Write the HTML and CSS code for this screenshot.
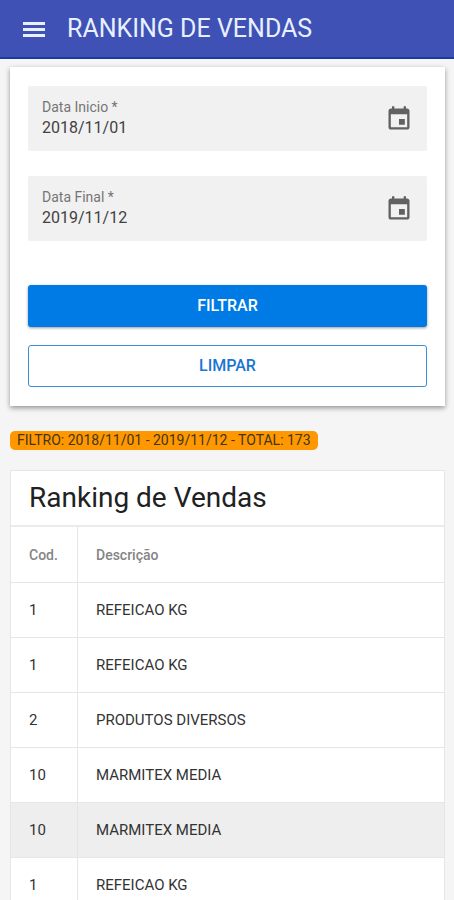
FILE: index.html
```html
<!DOCTYPE html>
<html lang="pt-BR">
<head>
    <meta charset="UTF-8">
    <meta name="viewport" content="width=device-width, initial-scale=1.0">
    <title>Ranking de Vendas</title>
    <link rel="stylesheet" href="styles.css">
</head>
<body>
    <header class="toolbar">
        <button type="button" class="menu-btn" aria-label="Menu">
            <svg width="22" height="18" viewBox="0 0 22 18" fill="currentColor">
                <path d="M0 2h22v3H0zM0 8h22v3H0zM0 14h22v3H0z"/>
            </svg>
        </button>
        <h1>RANKING DE VENDAS</h1>
    </header>

    <main class="content">
        <form class="card filter" id="filterForm">
            <div class="field">
                <div class="field-text">
                    <label for="data_inicio">Data Inicio *</label>
                    <input type="text" name="data_inicio" id="data_inicio" value="2018/11/01" required>
                </div>
                <button type="button" class="date-btn" aria-label="Escolher data inicio">
                    <svg width="28" height="28" viewBox="0 0 24 24" fill="currentColor">
                        <path d="M17 12h-5v5h5v-5zM16 1v2H8V1H6v2H5c-1.110 0-1.990.9-1.990 2L3 19c0 1.100.89 2 2 2h14c1.100 0 2-.9 2-2V5c0-1.100-.9-2-2-2h-1V1h-2zm3 18H5V8h14v11z"/>
                    </svg>
                </button>
            </div>

            <div class="field">
                <div class="field-text">
                    <label for="data_final">Data Final *</label>
                    <input type="text" name="data_final" id="data_final" value="2019/11/12" required>
                </div>
                <button type="button" class="date-btn" aria-label="Escolher data final">
                    <svg width="28" height="28" viewBox="0 0 24 24" fill="currentColor">
                        <path d="M17 12h-5v5h5v-5zM16 1v2H8V1H6v2H5c-1.110 0-1.990.9-1.990 2L3 19c0 1.100.89 2 2 2h14c1.100 0 2-.9 2-2V5c0-1.100-.9-2-2-2h-1V1h-2zm3 18H5V8h14v11z"/>
                    </svg>
                </button>
            </div>

            <div class="actions">
                <button type="submit" class="btn btn-primary">FILTRAR</button>
                <button type="reset" class="btn btn-outline">LIMPAR</button>
            </div>
        </form>

        <span class="badge">FILTRO: 2018/11/01 - 2019/11/12 - TOTAL: 173</span>

        <section class="ranking">
            <h2>Ranking de Vendas</h2>
            <table>
                <thead>
                    <tr><th>Cod.</th><th>Descrição</th></tr>
                </thead>
                <tbody>
                    <tr><td>1</td><td>REFEICAO KG</td></tr>
                    <tr><td>1</td><td>REFEICAO KG</td></tr>
                    <tr><td>2</td><td>PRODUTOS DIVERSOS</td></tr>
                    <tr><td>10</td><td>MARMITEX MEDIA</td></tr>
                    <tr class="selected"><td>10</td><td>MARMITEX MEDIA</td></tr>
                    <tr><td>1</td><td>REFEICAO KG</td></tr>
                </tbody>
            </table>
        </section>
    </main>
</body>
</html>
```

FILE: styles.css
```css
* { box-sizing: border-box; }
body { margin: 0; height: 100vh; display: flex; flex-direction: column; background-color: #f5f5f5; font-family: Roboto, sans-serif; color: #212121; }
button, input { font-family: inherit; }
button { cursor: pointer; }
svg { display: block; }

.toolbar { display: flex; flex-shrink: 0; align-items: center; gap: 22px; height: 59px; padding: 0 23px; background-color: #3f51b5; border-bottom: 2px solid #1a3a9c; color: #e8f0ff; }
.toolbar h1 { margin: 0; font-size: 25px; font-weight: 400; line-height: 32px; }
.menu-btn { padding: 0; border: 0; background: none; color: inherit; }

.content { flex: 1; min-height: 0; overflow-y: auto; scrollbar-width: none; padding: 8px 9px 0 10px; }

.card { background-color: #fff; box-shadow: 0 2px 5px rgba(0, 0, 0, 0.4); }
.filter { padding: 19px 18px; }
.field { display: flex; align-items: center; height: 65px; margin-bottom: 25px; padding: 0 14px; background-color: #f1f1f1; border-radius: 2px; }
.field-text { flex: 1; display: flex; flex-direction: column; }
.field label { font-size: 14px; line-height: 18px; color: #757575; }
.field input { width: 100%; height: 24px; padding: 0; border: 0; outline: 0; background: none; font-size: 16px; color: #424242; }
.date-btn { padding: 0; border: 0; background: none; color: #616161; }

.actions { display: flex; flex-direction: column; gap: 18px; margin-top: 44px; }
.btn { height: 42px; padding: 0 16px 2px; border-radius: 3px; font-size: 16px; font-weight: 500; }
.btn-primary { border: 0; background-color: #007be6; color: #fff; box-shadow: 0 1px 3px rgba(0, 0, 0, 0.4); }
.btn-outline { border: 1px solid #3d8fd6; background-color: #fff; color: #1976d2; }

.badge { display: block; width: fit-content; margin: 25px 0 20px; padding: 0 7px; border-radius: 5px; background-color: #ff9800; font-size: 14px; line-height: 19px; color: #42351c; }

.ranking { background-color: #fff; border: 1px solid #e6e6e6; }
.ranking h2 { margin: 0; padding: 0 18px; border-bottom: 2px solid #ebebeb; font-size: 28px; font-weight: 400; line-height: 54px; }
table { width: 100%; border-collapse: separate; border-spacing: 0; }
th, td { height: 55px; padding: 0 18px; border-bottom: 1px solid #e6e6e6; font-size: 15px; font-weight: 400; text-align: left; color: #333; }
th { height: 56px; font-size: 14px; font-weight: 500; color: #858585; }
th:first-child, td:first-child { width: 67px; border-right: 1px solid #e6e6e6; }
.selected { background-color: #eee; }
```
